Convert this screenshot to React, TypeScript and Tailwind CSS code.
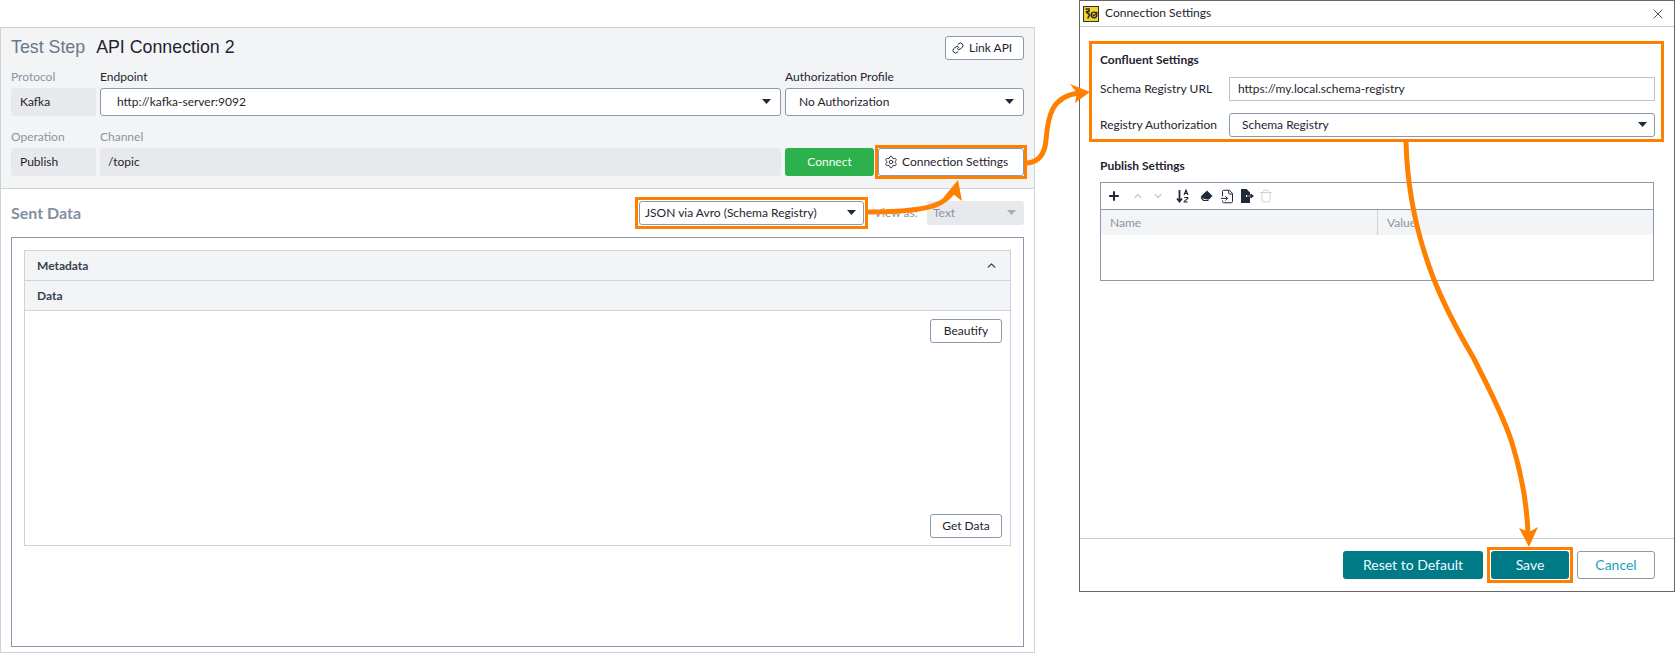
import { Link, Settings, ChevronUp, ChevronDown, Plus, X, FileInput, Trash } from "lucide-react";

const FONT = "font-['Lato','Noto_Sans',sans-serif]";

function Caret({ disabled = false }: { disabled?: boolean }) {
  return (
    <svg width="9" height="5" viewBox="0 0 9 5" className="shrink-0 mb-[2px]">
      <path d="M0 0h9L4.5 5z" fill={disabled ? "#a3acb9" : "#1f2937"} />
    </svg>
  );
}

function Select({ label, className }: { label: string; className: string }) {
  return (
    <div className={`flex items-center justify-between bg-white border border-[#8c98ad] rounded-[3px] text-[#1f2430] ${className}`}>
      <span>{label}</span>
      <Caret />
    </div>
  );
}

function ReadOnly({ label, className = "" }: { label: string; className?: string }) {
  return (
    <div className={`h-7 flex items-center bg-[#e7e9ed] rounded-[3px] text-[#1f2430] ${className}`}>{label}</div>
  );
}

function SmallButton({ label }: { label: string }) {
  return (
    <button className="w-[72px] h-6 bg-white border border-[#8c98ad] rounded-[3px] text-[#1f2430]">{label}</button>
  );
}

// orange callout frame laid over a control
function Highlight() {
  return <span className="absolute -inset-[4px] border-[3px] border-[#ff8000] pointer-events-none" />;
}

function AppIcon() {
  return (
    <svg width="16" height="16" viewBox="0 0 16 16" className="shrink-0">
      <rect x="0.5" y="0.5" width="15" height="15" fill="#f5d327" stroke="#333" />
      <path d="M2.5 3h3.5v2.5H3.5c0 2 2.5 1.5 3 3.5 0 1.5-1.5 1-1.5 3.5" fill="none" stroke="#2b2b2b" strokeWidth="1.6" />
      <circle cx="11" cy="9" r="2.8" fill="none" stroke="#2b2b2b" strokeWidth="1.3" />
      <path d="M9.5 8.5l1.4 1.4L14.5 6" fill="none" stroke="#2b2b2b" strokeWidth="1.3" />
    </svg>
  );
}

function PublishToolbar() {
  return (
    <div className="h-[27px] flex items-center border-b border-[#8c98ad] pl-[6px] text-[#1f2937]">
      <Plus size={14} strokeWidth={3.5} />
      <ChevronUp size={12} strokeWidth={2.5} className="ml-[11px] text-[#c3c9d2]" />
      <ChevronDown size={12} strokeWidth={2.5} className="ml-[8px] text-[#c3c9d2]" />
      {/* sort a-z */}
      <svg width="14" height="14" viewBox="0 0 14 14" className="ml-[12px]">
        <path d="M3.5 1v11M1 9.5L3.5 12.5 6 9.5" fill="none" stroke="#1f2937" strokeWidth="1.8" />
        <path d="M8 6l2-5 2 5M8.8 4.4h2.4M8.2 8.5h3.6v1L8.2 12.4v.6h3.6" fill="none" stroke="#1f2937" strokeWidth="1.1" />
      </svg>
      {/* eraser */}
      <svg width="13" height="12" viewBox="0 0 13 12" className="ml-[10px]">
        <path d="M7 .5L12.5 6 9 9.5H4L.8 6.5z" fill="#1f2937" />
        <path d="M1 7.5L3.5 10.5H8.5" fill="#fff" stroke="#1f2937" strokeWidth="1.2" />
      </svg>
      <FileInput size={15} strokeWidth={1.6} className="ml-[7px]" />
      {/* export */}
      <svg width="14" height="14" viewBox="0 0 14 14" className="ml-[5px]">
        <path d="M1 0h5.5L10 3.5V6H6v2h4v6H1z" fill="#1f2937" />
        <path d="M7 7h5M10.5 5l2.5 2-2.5 2" fill="none" stroke="#1f2937" strokeWidth="1.3" />
      </svg>
      <Trash size={14} strokeWidth={1.4} className="ml-[5px] text-[#c3c9d2]" />
    </div>
  );
}

export default function App() {
  return (
    <div className={`relative w-[1675px] h-[653px] flex bg-white text-xs overflow-hidden ${FONT}`}>
      {/* Test step panel */}
      <div className="w-[1035px] h-[626px] mt-[27px] flex flex-col border border-[#d0d3d6]">
        <div className="h-[161px] bg-[#f3f4f6] border-b border-[#d0d3d6] px-[10px] pt-2">
          <div className="h-6 flex items-center justify-between">
            <div className="flex gap-[11px] text-[17.8px] font-['Liberation_Sans',sans-serif]">
              <span className="text-[#6b7686]">Test Step</span>
              <span className="text-[#1f2430]">API Connection 2</span>
            </div>
            <button className="w-[79px] h-6 flex items-center gap-[5px] pl-[6px] bg-white border border-[#8c98ad] rounded-[3px] text-[#1f2430]">
              <Link size={12} />
              Link API
            </button>
          </div>
          <div className="grid grid-cols-[85px_1fr_239px] gap-x-1 mt-[6px]">
            <div className="h-[22px] flex items-center text-[#8a94a3]">Protocol</div>
            <div className="h-[22px] flex items-center text-[#1f2430]">Endpoint</div>
            <div className="h-[22px] flex items-center text-[#1f2430]">Authorization Profile</div>
            <ReadOnly label="Kafka" className="pl-[9px]" />
            <Select label="http://kafka-server:9092" className="h-7 pl-[16px] pr-[9px]" />
            <Select label="No Authorization" className="h-7 pl-[13px] pr-[9px]" />
            <div className="h-[22px] mt-[10px] flex items-center text-[#8a94a3]">Operation</div>
            <div className="h-[22px] mt-[10px] flex items-center text-[#8a94a3]">Channel</div>
            <div className="mt-[10px]" />
            <ReadOnly label="Publish" className="pl-[9px]" />
            <ReadOnly label="/topic" className="pl-2" />
            <div className="flex gap-1">
              <button className="w-[89px] h-7 bg-[#2db14c] rounded-[3px] text-[#f2fff5]">Connect</button>
              <button className="relative w-[146px] h-7 flex items-center gap-1 pl-[5px] bg-white border border-[#8c98ad] rounded-[3px] text-[#1f2430]">
                <Settings size={14} strokeWidth={1.5} />
                Connection Settings
                <Highlight />
              </button>
            </div>
          </div>
        </div>

        <div className="flex-1 flex flex-col px-[10px] pt-3 pb-[5px]">
          <div className="h-6 flex items-center">
            <span className="text-[16px] font-bold text-[#8290a3]">Sent Data</span>
            <div className="relative w-[225px] ml-auto">
              <Select label="JSON via Avro (Schema Registry)" className="w-[225px] h-6 pl-[5px] pr-[7px]" />
              <Highlight />
            </div>
            <span className="w-[63px] pl-[10px] text-[#8a94a3]">View as:</span>
            <div className="w-[97px] h-6 flex items-center justify-between pl-[6px] pr-[8px] bg-[#e7e9ed] rounded-[3px] text-[#8a94a3]">
              Text
              <Caret disabled />
            </div>
          </div>

          <div className="flex-1 mt-3 border border-[#8c98ad] p-3 pb-[100px] flex">
            <div className="flex-1 flex flex-col border border-[#cfd2d6]">
              <div className="h-[30px] shrink-0 flex items-center justify-between bg-[#f3f4f6] border-b border-[#cfd2d6] pl-3 pr-[12px] font-bold text-[#374151]">
                Metadata
                <ChevronUp size={13} strokeWidth={2.5} />
              </div>
              <div className="h-[30px] shrink-0 flex items-center bg-[#f3f4f6] border-b border-[#cfd2d6] pl-3 font-bold text-[#374151]">
                Data
              </div>
              <div className="flex-1 flex flex-col justify-between items-end pt-2 pr-[8px] pb-[7px]">
                <SmallButton label="Beautify" />
                <SmallButton label="Get Data" />
              </div>
            </div>
          </div>
        </div>
      </div>

      {/* Connection settings dialog */}
      <div className="w-[596px] h-[592px] ml-[44px] flex flex-col border border-[#666] text-[#1f2430]">
        <div className="h-[26px] shrink-0 flex items-center border-b border-[#ccc] pl-[3px] pr-[8px]">
          <AppIcon />
          <span className="ml-[6px] flex-1 pb-[2px]">Connection Settings</span>
          <X size={16} strokeWidth={1.2} />
        </div>

        <div className="h-[101px] shrink-0 mt-[14px] ml-[9px] mr-[10px] border-[3px] border-[#ff8000] pl-2 pr-[6px] pt-[6px]">
          <div className="h-5 flex items-center font-bold">Confluent Settings</div>
          <div className="h-6 mt-[7px] flex items-center">
            <span className="w-[129px]">Schema Registry URL</span>
            <div className="flex-1 h-6 flex items-center pl-[8px] border border-[#bcc3cf]">https://my.local.schema-registry</div>
          </div>
          <div className="h-6 mt-3 flex items-center">
            <span className="w-[129px]">Registry Authorization</span>
            <Select label="Schema Registry" className="flex-1 h-6 pl-[12px] pr-[7px]" />
          </div>
        </div>

        <div className="h-5 mt-[14px] ml-5 flex items-center font-bold">Publish Settings</div>
        <div className="h-[99px] shrink-0 mt-[6px] ml-5 w-[554px] border border-[#8c98ad]">
          <PublishToolbar />
          <div className="h-[25px] flex bg-[#f3f4f6] text-[#8a94a3]">
            <div className="w-[277px] flex items-center pl-[9px] border-r border-[#d0d3d6]">Name</div>
            <div className="flex-1 flex items-center pl-[9px]">Value</div>
          </div>
        </div>

        <div className="mt-auto border-t border-[#ccc] flex justify-end gap-[8px] pt-3 pb-3 pr-[19px] text-sm">
          <button className="w-[140px] h-7 bg-[#007a87] rounded-[3px] text-[#eefcff]">Reset to Default</button>
          <button className="relative w-[78px] h-7 bg-[#007a87] rounded-[3px] text-[#eefcff]">
            Save
            <Highlight />
          </button>
          <button className="w-[78px] h-7 bg-white border border-[#8c98ad] rounded-[3px] text-[#18a3c2]">Cancel</button>
        </div>
      </div>

      {/* callout arrows over the screenshot */}
      <svg width="1675" height="653" viewBox="0 0 1675 653" className="absolute inset-0 pointer-events-none">
        <g fill="none" stroke="#ff8000" strokeWidth="5">
          <path d="M1027 163C1040 162 1045 152 1046 140C1048 115 1052 97 1078 93" />
          <path d="M867 212C895 212 925 210 938 204C945 201 949 197 953 192" />
          <path d="M1406 142C1407 180 1413 225 1433 277C1445 308 1463 340 1473 357C1490 390 1505 420 1512 443C1522 475 1527 505 1528 534" />
        </g>
        <g fill="#ff8000">
          <path d="M1090 92L1070 84L1077 93L1075 103Z" />
          <path d="M958 180L943 198L953 194L962 201Z" />
          <path d="M1529 547L1519 528L1529 532L1538 527Z" />
        </g>
      </svg>
    </div>
  );
}
